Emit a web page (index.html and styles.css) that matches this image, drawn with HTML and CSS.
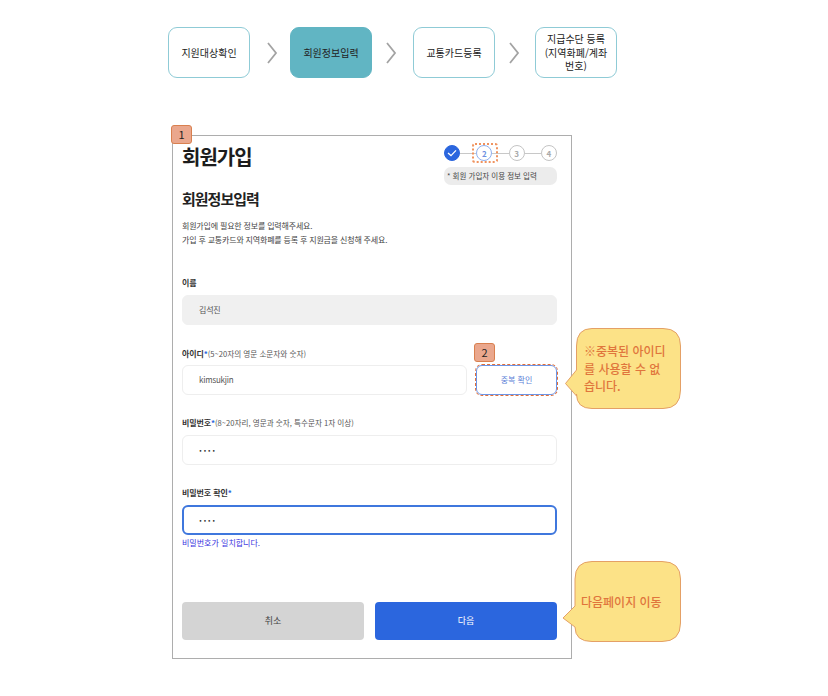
FILE: index.html
```html
<!DOCTYPE html>
<html lang="ko">
<head>
    <meta charset="UTF-8">
    <title>회원가입</title>
    <link rel="stylesheet" href="styles.css">
</head>
<body>

    <!-- process steps -->
    <div class="process">
        <div class="process-box">지원대상확인</div>
        <svg class="process-arrow" width="40" height="22" viewBox="0 0 40 22"><path d="M18 1 L26 11 L18 21" fill="none" stroke="#a3a3a3" stroke-width="1.8"/></svg>
        <div class="process-box active">회원정보입력</div>
        <svg class="process-arrow" width="41" height="22" viewBox="0 0 41 22"><path d="M15 1 L23 11 L15 21" fill="none" stroke="#a3a3a3" stroke-width="1.8"/></svg>
        <div class="process-box">교통카드등록</div>
        <svg class="process-arrow" width="40" height="22" viewBox="0 0 40 22"><path d="M15 1 L23 11 L15 21" fill="none" stroke="#a3a3a3" stroke-width="1.8"/></svg>
        <div class="process-box">지급수단 등록<br>(지역화폐/계좌<br>번호)</div>
    </div>

    <!-- join panel -->
    <div class="panel">
        <div class="badge badge-one">1</div>

        <div class="panel-head">
            <h1 class="title">회원가입</h1>
            <div class="stepper-box">
                <div class="stepper">
                    <span class="dot done">
                        <svg width="10" height="8" viewBox="0 0 10 8"><path d="M1 4 L4 6.6 L9 1.4" fill="none" stroke="#fff" stroke-width="1.3"/></svg>
                    </span>
                    <span class="line"></span>
                    <span class="dot current">2</span>
                    <span class="line"></span>
                    <span class="dot">3</span>
                    <span class="line"></span>
                    <span class="dot">4</span>
                    <span class="dot-mark"></span>
                </div>
                <div class="step-note">* 회원 가입자 이용 정보 입력</div>
            </div>
        </div>

        <h2 class="subtitle">회원정보입력</h2>
        <p class="desc">회원가입에 필요한 정보를 입력해주세요.<br>가입 후 교통카드와 지역화폐를 등록 후 지원금을 신청해 주세요.</p>

        <div class="group group-name">
            <div class="label">이름</div>
            <div class="field readonly">김석진</div>
        </div>

        <div class="group group-id">
            <div class="label">아이디<em>*</em><span>(5~20자의 영문 소문자와 숫자)</span></div>
            <div class="id-row">
                <div class="field">kimsukjin</div>
                <div class="check-btn">중복 확인</div>
            </div>
        </div>

        <div class="group">
            <div class="label">비밀번호<em>*</em><span>(8~20자리, 영문과 숫자, 특수문자 1자 이상)</span></div>
            <div class="field pw">····</div>
        </div>

        <div class="group">
            <div class="label">비밀번호 확인<em>*</em></div>
            <div class="field pw focus">····</div>
            <div class="match">비밀번호가 일치합니다.</div>
        </div>

        <div class="buttons">
            <div class="btn cancel">취소</div>
            <div class="btn next">다음</div>
        </div>

        <div class="badge badge-two">2</div>

        <div class="callout callout-id">
            <svg width="116" height="81" viewBox="0 0 116 81"><path d="M27 .5 H98 Q115.500 .5 115.500 18 V62 Q115.500 80.500 98 80.500 H27 Q11.500 80.500 11.500 66 V68 L.5 55.500 L11.500 42 V18 Q11.500 .5 27 .5 Z" fill="#fce287" stroke="#e4a066"/></svg>
            <div class="callout-text">※중복된 아이디를 사용할 수 없습니다.</div>
        </div>

        <div class="callout callout-next">
            <svg width="120" height="82" viewBox="0 0 120 82"><path d="M30 .5 H100 Q118.500 .5 118.500 18 V62 Q118.500 80.500 100 80.500 H30 Q13 80.500 13 66 L1 57 L13 45 V18 Q13 .5 30 .5 Z" fill="#fce287" stroke="#e4a066"/></svg>
            <div class="callout-text">다음페이지 이동</div>
        </div>
    </div>

</body>
</html>
```

FILE: styles.css
```css
*{
    margin: 0;
    padding: 0;
    box-sizing: border-box;
}
body{
    font-family: "Noto Sans CJK KR", "Noto Sans", sans-serif;
    background: #fff;
    color: #222;
}
.process{
    display: flex;
    align-items: center;
    margin: 27px 0 0 168px;
}
.process-box{
    width: 82px;
    height: 51px;
    display: flex;
    align-items: center;
    justify-content: center;
    text-align: center;
    font-size: 10px;
    line-height: 13.5px;
    color: #222;
    border: 1px solid #8fcbd6;
    border-radius: 9px;
}
.process-box.active{
    background: #61b5c3;
    border-color: #61b5c3;
}
.panel{
    position: relative;
    width: 400px;
    height: 524px;
    margin: 57px 0 0 172px;
    padding: 6px 14px 17px 9px;
    border: 1px solid #adadad;
}
.panel-head{
    display: flex;
    justify-content: space-between;
    align-items: flex-start;
}
.title{
    font-size: 20px;
    line-height: 30px;
    font-weight: 700;
    letter-spacing: -1px;
    color: #1c1c1c;
}
.stepper-box{
    width: 113px;
    padding-top: 3px;
}
.stepper{
    position: relative;
    display: flex;
    align-items: center;
    height: 16px;
}
.dot{
    flex: none;
    width: 16px;
    height: 16px;
    display: flex;
    align-items: center;
    justify-content: center;
    font-size: 8px;
    font-weight: 700;
    color: #aaa;
    background: #fff;
    border: 1px solid #c4c4c4;
    border-radius: 50%;
}
.dot.done{
    background: #2b66de;
    border-color: #2b66de;
}
.dot.current{
    color: #6c8fe0;
    border-color: #8fb0ef;
}
.line{
    flex: 1;
    height: 1px;
    background: #c8c8c8;
}
.dot-mark{
    position: absolute;
    left: 28px;
    top: -2px;
    width: 26px;
    height: 20px;
    border: 2px dotted #f0935f;
    border-radius: 3px;
}
.step-note{
    margin-top: 6px;
    height: 18px;
    padding-left: 3px;
    font-size: 7.5px;
    line-height: 17px;
    color: #444;
    background: #ececec;
    border-radius: 7px;
}
.subtitle{
    margin-top: 3px;
    font-size: 15px;
    line-height: 22px;
    font-weight: 700;
    letter-spacing: -1px;
    color: #222;
}
.desc{
    margin-top: 9px;
    font-size: 8px;
    line-height: 14px;
    letter-spacing: -0.18px;
    color: #444;
}
.group{
    margin-top: 22px;
}
.group-name{
    margin-top: 30px;
}
.group-id{
    margin-top: 23px;
}
.label{
    height: 12px;
    margin-bottom: 6px;
    font-size: 8px;
    line-height: 12px;
    font-weight: 700;
    letter-spacing: -0.1px;
    color: #333;
}
.group-id .label{
    margin-bottom: 5px;
}
.label em{
    font-style: normal;
    color: #2b66de;
}
.label span{
    font-size: 7.6px;
    font-weight: 400;
    letter-spacing: 0;
    color: #555;
}
.field{
    flex: 1;
    height: 30px;
    padding-left: 16px;
    font-size: 8px;
    line-height: 28px;
    letter-spacing: -0.2px;
    color: #555;
    background: #fff;
    border: 1px solid #eee;
    border-radius: 6px;
}
.field.readonly{
    background: #f0f0f0;
    border-color: #f0f0f0;
}
.field.pw{
    font-size: 9px;
    font-weight: 700;
    line-height: 29px;
    letter-spacing: 1.5px;
    color: #333;
}
.field.focus{
    border: 2px solid #3f77dd;
    padding-left: 15px;
    line-height: 27px;
}
.id-row{
    display: flex;
    gap: 9px;
}
.check-btn{
    flex: none;
    width: 81px;
    height: 30px;
    font-size: 8px;
    line-height: 28px;
    text-align: center;
    color: #5c82d8;
    background: #fff;
    border: 1px solid #6c95e6;
    border-radius: 6px;
    outline: 1.5px dashed #e2703a;
    outline-offset: 0;
}
.match{
    margin-top: 2px;
    font-size: 8px;
    line-height: 12px;
    color: #3a34e0;
}
.buttons{
    display: flex;
    gap: 11px;
    margin-top: 53px;
}
.btn{
    flex: 1;
    height: 38px;
    font-size: 9px;
    line-height: 38px;
    text-align: center;
    border-radius: 4px;
}
.cancel{
    background: #d4d4d4;
    color: #444;
}
.next{
    background: #2b66de;
    color: #fff;
}
.badge{
    position: absolute;
    width: 21px;
    height: 19px;
    font-size: 11px;
    line-height: 17px;
    text-align: center;
    color: #222;
    background: #eaa78d;
    border: 1px solid #d9804f;
    border-radius: 3px;
}
.badge-one{
    left: -2px;
    top: -11px;
}
.badge-two{
    left: 301px;
    top: 207px;
}
.callout{
    position: absolute;
}
.callout svg{
    position: absolute;
    left: 0;
    top: 0;
}
.callout-text{
    position: relative;
    font-size: 12px;
    line-height: 17.5px;
    font-weight: 500;
    color: #e0753c;
    word-break: break-all;
}
.callout-id{
    left: 392px;
    top: 192px;
    width: 116px;
    height: 81px;
    padding: 14px 13px 0 19px;
}
.callout-next{
    left: 389px;
    top: 425px;
    width: 120px;
    height: 82px;
    padding: 32px 0 0 19px;
}
```
